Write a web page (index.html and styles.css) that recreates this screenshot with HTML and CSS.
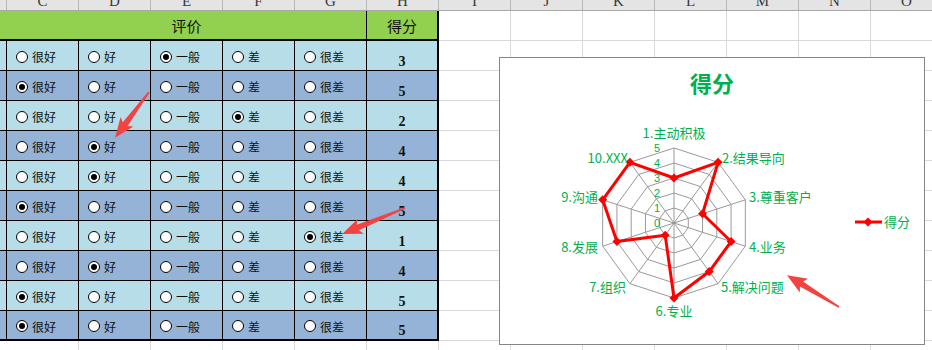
FILE: index.html
```html
<!DOCTYPE html>
<html lang="zh">
<head>
    <meta charset="UTF-8">
    <title>得分</title>
    <link rel="stylesheet" href="styles.css">
</head>
<body>
<div class="page">

    <div class="colhead">
        <div class="ch b"></div>
        <div class="ch"><span>C</span></div>
        <div class="ch"><span>D</span></div>
        <div class="ch"><span>E</span></div>
        <div class="ch"><span>F</span></div>
        <div class="ch"><span>G</span></div>
        <div class="ch"><span>H</span></div>
        <div class="ch"><span>I</span></div>
        <div class="ch"><span>J</span></div>
        <div class="ch"><span>K</span></div>
        <div class="ch"><span>L</span></div>
        <div class="ch"><span>M</span></div>
        <div class="ch"><span>N</span></div>
        <div class="ch"><span>O</span></div>
    </div>

    <div class="sheet">
        <div class="tbl">
            <div class="row head">
                <div class="cell b"></div>
                <div class="cell merged">评价</div>
                <div class="cell score">得分</div>
            </div>
            <!-- 1 -->
            <div class="row lt">
                <div class="cell b"></div>
                <div class="cell opt"><i class="radio"></i>很好</div>
                <div class="cell opt"><i class="radio"></i>好</div>
                <div class="cell opt"><i class="radio on"></i>一般</div>
                <div class="cell opt"><i class="radio"></i>差</div>
                <div class="cell opt"><i class="radio"></i>很差</div>
                <div class="cell score">3</div>
            </div>
            <!-- 2 -->
            <div class="row dk">
                <div class="cell b"></div>
                <div class="cell opt"><i class="radio on"></i>很好</div>
                <div class="cell opt"><i class="radio"></i>好</div>
                <div class="cell opt"><i class="radio"></i>一般</div>
                <div class="cell opt"><i class="radio"></i>差</div>
                <div class="cell opt"><i class="radio"></i>很差</div>
                <div class="cell score">5</div>
            </div>
            <!-- 3 -->
            <div class="row lt">
                <div class="cell b"></div>
                <div class="cell opt"><i class="radio"></i>很好</div>
                <div class="cell opt"><i class="radio"></i>好</div>
                <div class="cell opt"><i class="radio"></i>一般</div>
                <div class="cell opt"><i class="radio on"></i>差</div>
                <div class="cell opt"><i class="radio"></i>很差</div>
                <div class="cell score">2</div>
            </div>
            <!-- 4 -->
            <div class="row dk">
                <div class="cell b"></div>
                <div class="cell opt"><i class="radio"></i>很好</div>
                <div class="cell opt"><i class="radio on"></i>好</div>
                <div class="cell opt"><i class="radio"></i>一般</div>
                <div class="cell opt"><i class="radio"></i>差</div>
                <div class="cell opt"><i class="radio"></i>很差</div>
                <div class="cell score">4</div>
            </div>
            <!-- 5 -->
            <div class="row lt">
                <div class="cell b"></div>
                <div class="cell opt"><i class="radio"></i>很好</div>
                <div class="cell opt"><i class="radio on"></i>好</div>
                <div class="cell opt"><i class="radio"></i>一般</div>
                <div class="cell opt"><i class="radio"></i>差</div>
                <div class="cell opt"><i class="radio"></i>很差</div>
                <div class="cell score">4</div>
            </div>
            <!-- 6 -->
            <div class="row dk">
                <div class="cell b"></div>
                <div class="cell opt"><i class="radio on"></i>很好</div>
                <div class="cell opt"><i class="radio"></i>好</div>
                <div class="cell opt"><i class="radio"></i>一般</div>
                <div class="cell opt"><i class="radio"></i>差</div>
                <div class="cell opt"><i class="radio"></i>很差</div>
                <div class="cell score">5</div>
            </div>
            <!-- 7 -->
            <div class="row lt">
                <div class="cell b"></div>
                <div class="cell opt"><i class="radio"></i>很好</div>
                <div class="cell opt"><i class="radio"></i>好</div>
                <div class="cell opt"><i class="radio"></i>一般</div>
                <div class="cell opt"><i class="radio"></i>差</div>
                <div class="cell opt"><i class="radio on"></i>很差</div>
                <div class="cell score">1</div>
            </div>
            <!-- 8 -->
            <div class="row dk">
                <div class="cell b"></div>
                <div class="cell opt"><i class="radio"></i>很好</div>
                <div class="cell opt"><i class="radio on"></i>好</div>
                <div class="cell opt"><i class="radio"></i>一般</div>
                <div class="cell opt"><i class="radio"></i>差</div>
                <div class="cell opt"><i class="radio"></i>很差</div>
                <div class="cell score">4</div>
            </div>
            <!-- 9 -->
            <div class="row lt">
                <div class="cell b"></div>
                <div class="cell opt"><i class="radio on"></i>很好</div>
                <div class="cell opt"><i class="radio"></i>好</div>
                <div class="cell opt"><i class="radio"></i>一般</div>
                <div class="cell opt"><i class="radio"></i>差</div>
                <div class="cell opt"><i class="radio"></i>很差</div>
                <div class="cell score">5</div>
            </div>
            <!-- 10 -->
            <div class="row dk end">
                <div class="cell b"></div>
                <div class="cell opt"><i class="radio on"></i>很好</div>
                <div class="cell opt"><i class="radio"></i>好</div>
                <div class="cell opt"><i class="radio"></i>一般</div>
                <div class="cell opt"><i class="radio"></i>差</div>
                <div class="cell opt"><i class="radio"></i>很差</div>
                <div class="cell score">5</div>
            </div>
        </div>
    </div>

    <!-- diagrammet ligger oppå regnearket -->
    <div class="chart">
        <div class="chart-title">得分</div>
        <svg class="radar" width="424" height="238" viewBox="0 48 424 238">
            <defs>
                <path id="dm" d="M0 -4.5 L4.5 0 L0 4.5 L-4.5 0 Z"/>
            </defs>
            <g transform="translate(174 165)">
                <g class="web">
                    <polygon transform="scale(0.2)" points="0,-75 44.08,-60.68 71.33,-23.18 71.33,23.18 44.08,60.68 0,75 -44.08,60.68 -71.33,23.18 -71.33,-23.18 -44.08,-60.68"/>
                    <polygon transform="scale(0.4)" points="0,-75 44.08,-60.68 71.33,-23.18 71.33,23.18 44.08,60.68 0,75 -44.08,60.68 -71.33,23.18 -71.33,-23.18 -44.08,-60.68"/>
                    <polygon transform="scale(0.6)" points="0,-75 44.08,-60.68 71.33,-23.18 71.33,23.18 44.08,60.68 0,75 -44.08,60.68 -71.33,23.18 -71.33,-23.18 -44.08,-60.68"/>
                    <polygon transform="scale(0.8)" points="0,-75 44.08,-60.68 71.33,-23.18 71.33,23.18 44.08,60.68 0,75 -44.08,60.68 -71.33,23.18 -71.33,-23.18 -44.08,-60.68"/>
                    <polygon points="0,-75 44.08,-60.68 71.33,-23.18 71.33,23.18 44.08,60.68 0,75 -44.08,60.68 -71.33,23.18 -71.33,-23.18 -44.08,-60.68"/>
                    <path d="M0 0 L0 -75 M0 0 L44.08 -60.68 M0 0 L71.33 -23.18 M0 0 L71.33 23.18 M0 0 L44.08 60.68 M0 0 L0 75 M0 0 L-44.08 60.68 M0 0 L-71.33 23.18 M0 0 L-71.33 -23.18 M0 0 L-44.08 -60.68"/>
                </g>
                <polygon class="serie" points="0,-45 44.08,-60.68 28.53,-9.27 57.07,18.54 35.27,48.54 0,75 -8.82,12.14 -57.07,18.54 -71.33,-23.18 -44.08,-60.68"/>
                <g class="pts">
                    <use href="#dm" x="0" y="-45"/>
                    <use href="#dm" x="44.08" y="-60.68"/>
                    <use href="#dm" x="28.53" y="-9.27"/>
                    <use href="#dm" x="57.07" y="18.54"/>
                    <use href="#dm" x="35.27" y="48.54"/>
                    <use href="#dm" x="0" y="75"/>
                    <use href="#dm" x="-8.82" y="12.14"/>
                    <use href="#dm" x="-57.07" y="18.54"/>
                    <use href="#dm" x="-71.33" y="-23.18"/>
                    <use href="#dm" x="-44.08" y="-60.68"/>
                </g>
            </g>

            <g class="scale">
                <text x="157" y="94">5</text>
                <text x="157" y="109">4</text>
                <text x="157" y="124">3</text>
                <text x="157" y="139">2</text>
                <text x="157" y="154">1</text>
                <text x="157" y="169">0</text>
            </g>

            <g class="labels">
                <text x="174" y="80" text-anchor="middle">1.主动积极</text>
                <text x="222" y="105">2.结果导向</text>
                <text x="249" y="144">3.尊重客户</text>
                <text x="249" y="194">4.业务</text>
                <text x="221" y="234">5.解决问题</text>
                <text x="174" y="258" text-anchor="middle">6.专业</text>
                <text x="126" y="234" text-anchor="end">7.组织</text>
                <text x="98" y="194" text-anchor="end">8.发展</text>
                <text x="98" y="144" text-anchor="end">9.沟通</text>
                <text x="128" y="105" text-anchor="end">10.XXX</text>
            </g>

            <g class="legend">
                <line x1="355" y1="164" x2="382" y2="164"/>
                <use href="#dm" x="368" y="164"/>
                <text x="384" y="169">得分</text>
            </g>
        </svg>
    </div>

    <!-- røde piler -->
    <svg class="marks" width="932" height="350">
        <g transform="translate(149 92) rotate(126.5)">
            <polygon points="0,-0.8 40,-3 37,-8 57,0 37,8 40,3 0,0.8"/>
        </g>
        <g transform="translate(405 208) rotate(157.5)">
            <polygon points="0,-0.8 51,-3 48,-8 68,0 48,8 51,3 0,0.8"/>
        </g>
        <g transform="translate(839 307) rotate(-148.5)">
            <polygon points="0,-0.8 44,-3 41,-8 61,0 41,8 44,3 0,0.8"/>
        </g>
    </svg>

</div>
</body>
</html>
```

FILE: styles.css
```css
body {
    margin: 0;
    background-color: #fff;
    font-family: "Noto Sans CJK SC", sans-serif;
    overflow: hidden;
}
.page {
    position: relative;
    width: 932px;
    height: 350px;
    overflow: hidden;
}

/* kolonneoverskrift */
.colhead {
    display: flex;
    height: 11px;
    box-sizing: border-box;
    border-bottom: 1px solid #a9a9a9;
    background-color: #e4e4e4;
    overflow: hidden;
}
.ch {
    flex: none;
    width: 72px;
    box-sizing: border-box;
    border-right: 1px solid #b8b8b8;
    text-align: center;
    font: 15px/11px "Liberation Serif", serif;
    color: #3a3a3a;
}
.ch span {
    display: block;
    margin-top: -4px;
}
.ch.b {
    width: 7px;
}

/* regneark */
.sheet {
    height: 339px;
    background-image:
        repeating-linear-gradient(to right, transparent 0 71px, #d9d9d9 71px 72px),
        repeating-linear-gradient(to bottom, transparent 0 29px, #d9d9d9 29px 30px);
    background-position: 7px 0, 0 0;
}
.tbl {
    width: 439px;
    box-sizing: border-box;
    border-right: 2px solid #000;
}
.row {
    display: flex;
    height: 30px;
    box-sizing: border-box;
    border-bottom: 1px solid #000;
}
.row.head {
    background-color: #92d050;
    border-bottom-width: 2px;
}
.row.lt {
    background-color: #b7dee8;
}
.row.dk {
    background-color: #95b3d7;
}
.row.end {
    border-bottom-width: 2px;
}
.cell {
    flex: none;
    width: 72px;
    box-sizing: border-box;
    border-right: 1px solid #000;
    display: flex;
    align-items: center;
    color: #111;
}
.cell.b {
    width: 7px;
}
.row.head .cell.b {
    border-right: 0;
}
.cell.merged {
    width: 360px;
    justify-content: center;
    font-size: 15px;
}
.cell.score {
    width: 70px;
    border-right: 0;
    justify-content: center;
    font-size: 15px;
}
.row:not(.head) .cell.score {
    align-items: flex-end;
    padding-bottom: 1px;
    font: bold 14px/14px "Liberation Serif", serif;
}
.cell.opt {
    padding-left: 9px;
    padding-top: 2px;
    gap: 4px;
    font-size: 12px;
}
.radio {
    flex: none;
    width: 12px;
    height: 12px;
    box-sizing: border-box;
    border: 1px solid #000;
    border-radius: 50%;
    background-color: #fff;
    display: flex;
    align-items: center;
    justify-content: center;
}
.radio.on::after {
    content: "";
    width: 6px;
    height: 6px;
    border-radius: 50%;
    background-color: #000;
}

/* diagram */
.chart {
    position: absolute;
    left: 499px;
    top: 57px;
    width: 426px;
    height: 288px;
    box-sizing: border-box;
    border: 1px solid #868686;
    background-color: #fff;
    display: flex;
    flex-direction: column;
}
.chart-title {
    height: 48px;
    line-height: 48px;
    text-align: center;
    font-size: 22px;
    font-weight: bold;
    color: #00b050;
}
.radar {
    display: block;
}
.radar text {
    font-family: "Noto Sans CJK SC", sans-serif;
    font-size: 13px;
    fill: #00b050;
}
.radar .scale text {
    font-family: "Liberation Sans", sans-serif;
    font-size: 11px;
    text-anchor: middle;
}
.web polygon,
.web path {
    fill: none;
    stroke: #9a9a9a;
    stroke-width: 1;
    vector-effect: non-scaling-stroke;
}
.serie {
    fill: none;
    stroke: #ff0000;
    stroke-width: 3;
    stroke-linejoin: round;
}
.pts use,
.legend use {
    fill: #ff0000;
}
.legend line {
    stroke: #ff0000;
    stroke-width: 3;
}

/* piler */
.marks {
    position: absolute;
    left: 0;
    top: 0;
    pointer-events: none;
}
.marks polygon {
    fill: #f24343;
}
```
